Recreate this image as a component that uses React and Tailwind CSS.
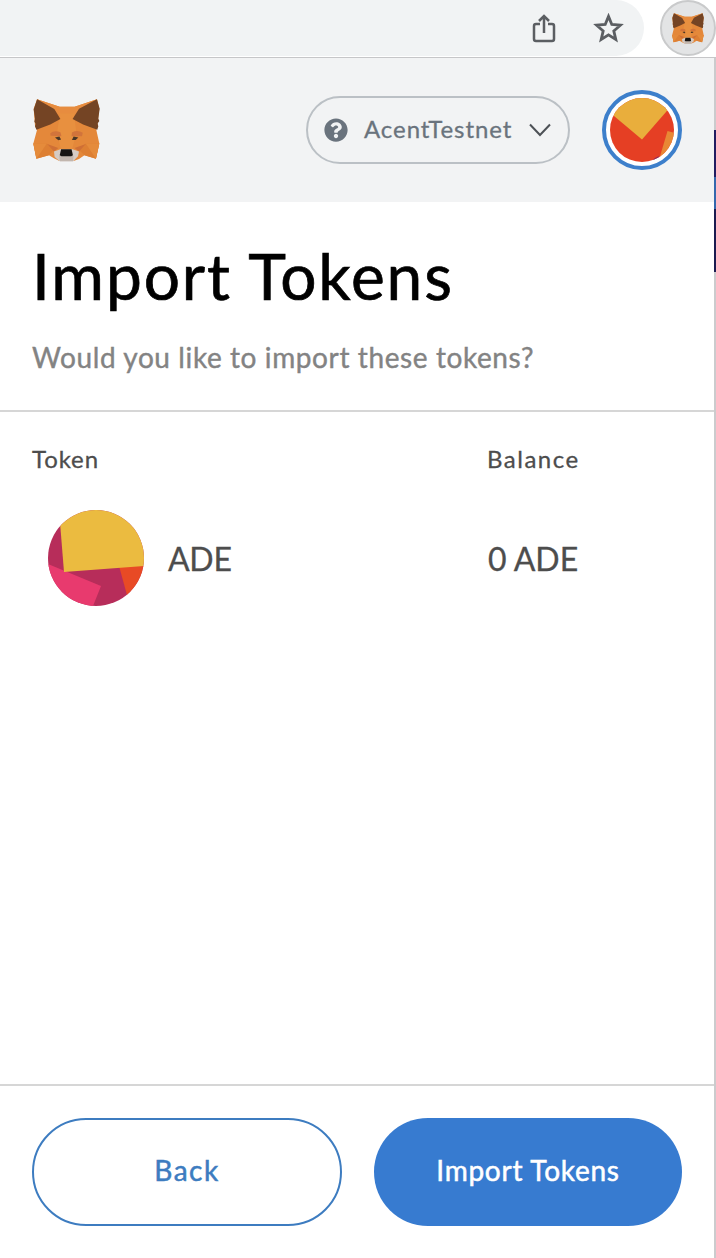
import React from "react";

function Fox({ className }) {
  return (
    <svg className={className} viewBox="42 57 198 188" preserveAspectRatio="none" aria-hidden="true">
      <path fill="#e4883a" d="M54 58 121 80H165L231 58 238 86 232 138 229 149 238 190 228 235 194 225 178 236 162 242H120L104 234 89 225 52 235 43 190 54 149 48 138 44 86Z" />
      <path fill="#e78c3f" d="M54 58 121 80H165L231 58 163 107H122Z" />
      <path fill="#e8903f" d="M122 100H163L170 158 157 210H125L113 158Z" />
      <path fill="#dd7f33" d="M43 190H83L104 209 89 225 52 235ZM238 190H198L178 209 194 225 228 235Z" />
      <path fill="#e58b3b" d="M43 190H83L52 235ZM238 190H198L228 235Z" />
      <path fill="#744424" d="M54 58 105 87 123 117 93 133 52 149 48 138 50 131 46 125 48 116 44 88Z" />
      <path fill="#744424" d="M231 58 178 86 159 117 190 133 232 149 235 138 233 130 238 123 235 115 239 86Z" />
      <path fill="#d2743b" d="M93 159Q105 149 123 156L126 168 94 167ZM157 157Q174 148 189 158L187 168 156 168Z" />
      <path fill="#4a3626" d="M107 172 120 169 125 178 117 180ZM157 179 162 169 176 172 168 179Z" />
      <path fill="#cf6f35" d="M84 191 117 203 104 214ZM198 191 165 203 178 214Z" />
      <path fill="#d5cbc4" d="M104 214 123 207H159L178 214 175 228 161 243H121L106 230Z" />
      <path fill="#c2b6ae" d="M119 226H162L160 243H122Z" />
      <path fill="#171412" d="M125 207H156L160 225 155 228H126L121 225Z" />
    </svg>
  );
}

function BrowserBar() {
  return (
    <div className="flex h-[58px] w-full shrink-0 justify-between border-b border-[#c6c6c8] bg-white">
      <div className="flex h-14 w-[644px] items-center justify-end gap-[37px] rounded-r-full bg-[#f1f3f4] pr-5">
        <svg className="h-[30px] w-6" viewBox="0 0 24 30" fill="none" stroke="#5b5e62" strokeWidth="2.5" strokeLinejoin="round" aria-hidden="true">
          <path d="M8 11H4Q2 11 2 13V26Q2 28 4 28H20Q22 28 22 26V13Q22 11 20 11H16" />
          <path d="M12 20V3M7 8 12 3 17 8" strokeLinejoin="miter" />
        </svg>
        <svg className="h-[30px] w-[31px]" viewBox="0 0 31 30" fill="none" stroke="#5b5e62" strokeWidth="2.8" aria-hidden="true">
          <path d="M15.5 3.4 18.8 11.5 27.4 12.2 20.8 17.9 22.8 26.4 15.5 21.8 8.2 26.4 10.2 17.9 3.6 12.2 12.2 11.5Z" />
        </svg>
      </div>
      <div className="flex h-14 w-14 shrink-0 items-center justify-center rounded-full border-2 border-[#c9cacb] bg-[#e3e4e5]">
        <Fox className="h-[31px] w-8" />
      </div>
    </div>
  );
}

function Header() {
  return (
    <header className="flex h-36 shrink-0 items-center bg-[#f2f3f4] pr-8 pl-[33px]">
      <Fox className="h-[63px] w-[67px]" />
      <button className="ml-auto flex h-[68px] w-[264px] items-center rounded-full border-2 border-[#bbc0c5] pl-4">
        <svg className="h-6 w-6" viewBox="0 0 512 512" fill="#6a737d" aria-hidden="true">
          <path d="M504 256c0 136.997-111.043 248-248 248S8 392.997 8 256C8 119.083 119.043 8 256 8s248 111.083 248 248zM262.655 90c-54.497 0-89.255 22.957-116.549 63.758-3.536 5.286-2.353 12.415 2.715 16.258l34.699 26.31c5.205 3.947 12.621 3.008 16.665-2.122 17.864-22.658 30.113-35.797 57.303-35.797 20.429 0 45.698 13.148 45.698 32.958 0 14.976-12.363 22.667-32.534 33.976C247.128 238.528 216 254.941 216 296v4c0 6.627 5.373 12 12 12h56c6.627 0 12-5.373 12-12v-1.333c0-28.462 83.186-29.647 83.186-106.667 0-58.002-60.165-102-116.531-102zM256 338c-25.365 0-46 20.635-46 46 0 25.364 20.635 46 46 46s46-20.636 46-46c0-25.365-20.635-46-46-46z" />
        </svg>
        <span className="ml-4 w-[149px] pb-0.5 text-left text-2xl tracking-[0.95px] whitespace-nowrap text-[#6a737d] [-webkit-text-stroke:0.3px_#6a737d]">AcentTestnet</span>
        <svg className="ml-[15px] h-4 w-6" viewBox="0 0 24 16" fill="none" stroke="#4d5156" strokeWidth="2" aria-hidden="true">
          <path d="M2 2.5 12 13 22 2.5" />
        </svg>
      </button>
      <svg className="ml-8 h-20 w-20" viewBox="0 0 80 80" aria-hidden="true">
        <defs>
          <clipPath id="account-disc"><circle cx="40" cy="40" r="32" /></clipPath>
        </defs>
        <circle cx="40" cy="40" r="38" fill="#fff" stroke="#3d7fcb" strokeWidth="4" />
        <g clipPath="url(#account-disc)">
          <path fill="#e53f24" d="M0 0H80V80H0Z" />
          <path fill="#e9ae3c" d="M0 0H80L64 22 40 49.5 12 26Z" />
          <path fill="#e88835" d="M65.5 41 80 45V80H54Z" />
          <path fill="#8a2862" d="M53 68 57 66 55 74H46Z" />
        </g>
      </svg>
    </header>
  );
}

function TokenIcon() {
  return (
    <svg className="h-24 w-24" viewBox="0 0 96 96" aria-hidden="true">
      <defs>
        <clipPath id="token-disc"><circle cx="48" cy="48" r="48" /></clipPath>
      </defs>
      <g clipPath="url(#token-disc)">
        <path fill="#b72d5a" d="M0 0H96V96H0Z" />
        <path fill="#e83a6e" d="M0 54 53 76 45 96H0Z" />
        <path fill="#e84a25" d="M71 56H96V96H82Z" />
        <path fill="#ebbb40" d="M11 0H96V56L16 62Z" />
      </g>
    </svg>
  );
}

export default function App() {
  return (
    <div className="flex h-[1258px] w-[716px] flex-col overflow-hidden bg-white font-[Lato,sans-serif]">
      <BrowserBar />
      <div className="flex min-h-0 flex-1">
        <div className="flex w-[714px] shrink-0 flex-col">
          <Header />
          <section className="h-[210px] shrink-0 border-b-2 border-[#d6d6d6] px-8">
            <h1 className="mt-[34px] text-[64px] leading-20 tracking-[1.9px] whitespace-nowrap text-black [-webkit-text-stroke:0.7px_black]">Import Tokens</h1>
            <p className="mt-[21px] text-[28px] leading-10 tracking-[0.6px] whitespace-nowrap text-[#838383] [-webkit-text-stroke:0.4px_#838383]">Would you like to import these tokens?</p>
          </section>
          <main className="flex-1 px-8 pt-[31px] text-[#4d4d4d] [-webkit-text-stroke:0.3px_#4d4d4d]">
            <div className="grid grid-cols-[455px_1fr] text-2xl leading-8">
              <span className="tracking-[0.9px]">Token</span>
              <span className="tracking-[1.5px]">Balance</span>
            </div>
            <div className="mt-[35px] grid grid-cols-[456px_1fr] items-center text-[32px] leading-10">
              <div className="flex items-center gap-6 pl-4">
                <TokenIcon />
                <span className="pt-0.5 tracking-[-0.3px]">ADE</span>
              </div>
              <span className="pt-0.5">0 ADE</span>
            </div>
          </main>
          <footer className="flex h-[174px] shrink-0 gap-8 border-t-2 border-[#d6d6d6] px-8 pt-8 text-[28px]">
            <button className="h-[108px] w-[310px] rounded-full border-2 border-[#3d7cc0] pb-1 tracking-[1.5px] text-[#3d7cc0] [-webkit-text-stroke:0.5px_#3d7cc0]">Back</button>
            <button className="h-[108px] w-[308px] rounded-full bg-[#377bd0] pb-1 tracking-[0.75px] text-white [-webkit-text-stroke:0.5px_white]">Import Tokens</button>
          </footer>
        </div>
        <div className="flex w-0.5 flex-col bg-[#cbcbcd]">
          <div className="mt-[72px] h-[47px] bg-[#211c61]" />
          <div className="h-8 bg-[#3568ad]" />
          <div className="h-[63px] bg-[#1b1b50]" />
        </div>
      </div>
    </div>
  );
}
